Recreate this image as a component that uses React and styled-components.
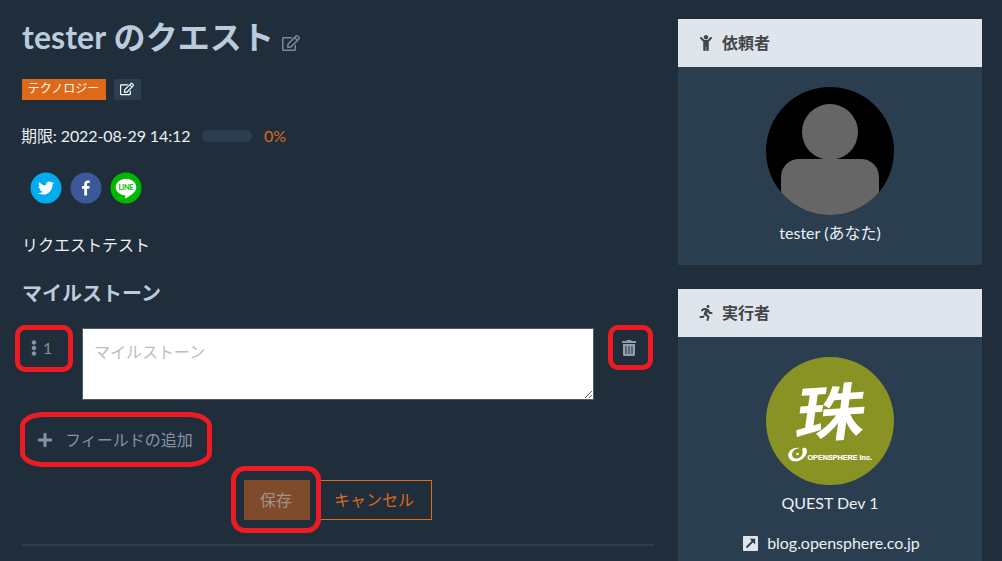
import React from "react";
import styled, { createGlobalStyle } from "styled-components";
import {
  FaRegEdit, FaChild, FaRunning, FaEllipsisV, FaTrashAlt, FaPlus,
} from "react-icons/fa";

const GlobalStyle = createGlobalStyle`
  *, *::before, *::after { box-sizing: border-box; }
  html, body { margin: 0; background: #202d3a; overflow: hidden; }
  body, button, textarea {
    font-family: Lato, "Noto Sans CJK JP", sans-serif;
    font-size: 16px;
    line-height: 24px;
  }
  body { color: #ebf0f5; }
  svg { display: block; flex: none; }
`;

const Page = styled.div`
  position: relative;
  height: 561px;
  overflow: hidden;
  display: grid;
  grid-template-columns: 632px 304px;
  column-gap: 24px;
  align-items: start;
  padding: 19px 20px 0 22px;
`;

const Main = styled.main`
  display: flex;
  flex-direction: column;
`;

const Title = styled.h1`
  display: flex;
  align-items: flex-end;
  gap: 8px;
  margin: 0;
  height: 36px;
  font-size: 32px;
  line-height: 36px;
  font-weight: 700;
  letter-spacing: 0.1px;
  color: #bccbdc;
  white-space: nowrap;
  svg { color: #7a8899; margin-bottom: 3px; }
`;

const Tags = styled.div`
  display: flex;
  gap: 8px;
  margin-top: 24px;
`;

const Tag = styled.span`
  display: flex;
  align-items: center;
  justify-content: center;
  width: ${(p) => p.$width}px;
  height: 21px;
  font-size: 12px;
  line-height: 20px;
  padding: 0 1px 1px 0;
  white-space: nowrap;
  color: #fff;
  background: ${(p) => p.$bg};
`;

const Deadline = styled.div`
  display: flex;
  align-items: center;
  gap: 12px;
  height: 24px;
  margin-top: 24px;
  white-space: nowrap;
`;

const DeadlineText = styled.span`
  width: 168px;
  margin-left: -1px;
  margin-right: 1px;
  letter-spacing: -0.1px;
`;

const Progress = styled.div`
  width: 50px;
  height: 12px;
  border-radius: 6px;
  background: #2b3e50;
`;

const Percent = styled.span`
  color: #df6919;
`;

const Shares = styled.div`
  display: flex;
  gap: 8px;
  margin: 24px 0 0 8px;
`;

const Description = styled.p`
  margin: 29px 0 0;
  height: 24px;
`;

const Subtitle = styled.h2`
  margin: 24px 0 0;
  height: 24px;
  font-size: 20px;
  line-height: 24px;
  font-weight: 700;
  color: #bccbdc;
`;

const FieldRow = styled.div`
  display: flex;
  align-items: flex-start;
  margin-top: 23px;
`;

const Handle = styled.div`
  display: flex;
  align-items: center;
  gap: 6px;
  width: 60px;
  height: 40px;
  padding-left: 9px;
  color: #8593a3;
`;

const HandleDots = styled(FaEllipsisV)`
  width: 6px;
  height: 16px;
`;

const Field = styled.textarea`
  width: 512px;
  height: 72px;
  margin: 0;
  padding: 11px;
  border: 1px solid #4e5d6c;
  border-radius: 0;
  background: #fff;
  resize: both;
  outline: none;
  &::placeholder { color: #b9bec4; opacity: 1; }
`;

const Remove = styled.button`
  display: flex;
  align-items: center;
  justify-content: center;
  width: 40px;
  height: 40px;
  margin-left: 15px;
  padding: 0;
  border: 0;
  background: none;
  color: #929eae;
`;

const AddField = styled.button`
  display: flex;
  align-items: center;
  align-self: flex-start;
  gap: 12px;
  height: 40px;
  margin-top: 20px;
  padding: 0 15px;
  border: 0;
  background: none;
  color: #8593a3;
`;

const Actions = styled.div`
  display: flex;
  justify-content: center;
  gap: 8px;
  margin-top: 20px;
`;

const Button = styled.button`
  height: 40px;
  padding: 0 17px 0 15px;
  border: 1px solid ${(p) => (p.$muted ? "#804b2a" : "#df6919")};
  background: ${(p) => (p.$muted ? "#804b2a" : "transparent")};
  color: ${(p) => (p.$muted ? "#9b9690" : "#df6919")};
`;

const Divider = styled.hr`
  width: 100%;
  height: 2px;
  margin: 24px 0 0;
  border: 0;
  background: #2b3e50;
`;

const Side = styled.aside`
  display: flex;
  flex-direction: column;
  gap: 24px;
`;

const Card = styled.section`
  height: ${(p) => p.$height}px;
  background: #2b3e50;
`;

const CardHeader = styled.header`
  display: flex;
  align-items: center;
  gap: 8px;
  height: 48px;
  padding-left: 20px;
  background: #dee5ed;
  color: #444648;
  font-weight: 700;
`;

const IconSlot = styled.span`
  display: flex;
  justify-content: center;
  width: 15px;
  margin-right: 1px;
`;

const CardBody = styled.div`
  display: flex;
  flex-direction: column;
  align-items: center;
  padding-top: 20px;
`;

const Name = styled.div`
  margin-top: 6px;
  height: 24px;
`;

const SiteLink = styled.div`
  display: flex;
  align-items: center;
  gap: 9px;
  margin-top: 16px;
  height: 24px;
  padding-left: 3px;
  letter-spacing: -0.04px;
`;

const Mark = styled.div`
  position: absolute;
  left: ${(p) => p.$x}px;
  top: ${(p) => p.$y}px;
  width: ${(p) => p.$w}px;
  height: ${(p) => p.$h}px;
  border: 5px solid #ed1c24;
  border-radius: ${(p) => p.$r};
  pointer-events: none;
`;

function ShareIcon({ color, children }) {
  return (
    <svg width="32" height="32" viewBox="0 0 64 64">
      <circle cx="32" cy="32" r="31" fill={color} />
      {children}
    </svg>
  );
}

function LinkIcon() {
  return (
    <svg width="15" height="15" viewBox="0 0 15 15">
      <rect width="15" height="15" rx="0.8" fill="#dee5ed" />
      <path d="M3.500 11.500L10 5" stroke="#2b3e50" strokeWidth="1.800" />
      <path d="M6.500 2.800H12.200V8.500Z" fill="#2b3e50" />
    </svg>
  );
}

function PersonAvatar() {
  return (
    <svg width="128" height="128" viewBox="0 0 128 128">
      <defs>
        <clipPath id="round"><circle cx="64" cy="64" r="64" /></clipPath>
      </defs>
      <g clipPath="url(#round)">
        <rect width="128" height="128" fill="#000" />
        <circle cx="64" cy="45" r="28" fill="#666" />
        <rect x="15" y="72" width="98" height="80" rx="18" fill="#666" />
      </g>
    </svg>
  );
}

function CompanyAvatar() {
  return (
    <svg width="128" height="128" viewBox="0 0 128 128">
      <circle cx="64" cy="64" r="64" fill="#889323" />
      <text
        transform="translate(27 81) skewX(-12) rotate(-4)"
        fontFamily="'Noto Sans CJK JP', sans-serif"
        fontWeight="700"
        fontSize="62"
        textLength="69"
        lengthAdjust="spacingAndGlyphs"
        fill="#fff"
      >珠</text>
      <path d="M34 91C27 89.500 22 94 22.300 98.500C22.700 103.500 28 106 33.500 103.500C39 101 42 96 40.500 92C39.500 90 36.500 90.500 36 92.500C38 96 35.500 100.500 31.500 101.500C27.500 102 25 99 26.500 95.500C28 92.500 30.500 91.500 34 91Z" fill="#fff" />
      <circle cx="31.500" cy="97" r="1.300" fill="#fff" />
      <text
        x="41.500" y="102.700"
        fontFamily="'Liberation Sans', sans-serif"
        fontWeight="700"
        fontSize="7.800"
        textLength="64.500"
        lengthAdjust="spacingAndGlyphs"
        fill="#fff"
        stroke="#fff"
        strokeWidth="0.200"
      >OPENSPHERE Inc.</text>
    </svg>
  );
}

export default function App() {
  return (
    <>
      <GlobalStyle />
      <Page>
        <Main>
          <Title>tester のクエスト<FaRegEdit size={18} /></Title>
          <Tags>
            <Tag $width={84} $bg="#df6919">テクノロジー</Tag>
            <Tag $width={27} $bg="#2b3e50"><FaRegEdit size={14} /></Tag>
          </Tags>
          <Deadline>
            <DeadlineText>期限: 2022-08-29 14:12</DeadlineText>
            <Progress />
            <Percent>0%</Percent>
          </Deadline>
          <Shares>
            <ShareIcon color="#00aced">
              <path fill="#fff" d="M48,22.1c-1.2,0.5-2.4,0.9-3.8,1c1.4-0.8,2.4-2.1,2.9-3.6c-1.3,0.8-2.7,1.3-4.2,1.6C41.7,19.8,40,19,38.2,19c-3.6,0-6.6,2.9-6.6,6.6c0,0.5,0.1,1,0.2,1.5c-5.5-0.3-10.3-2.9-13.5-6.9c-0.6,1-0.9,2.1-0.9,3.3c0,2.3,1.2,4.3,2.9,5.5c-1.1,0-2.1-0.3-3-0.8c0,0,0,0.1,0,0.1c0,3.2,2.3,5.8,5.3,6.4c-0.6,0.1-1.1,0.2-1.7,0.2c-0.4,0-0.8,0-1.2-0.1c0.8,2.6,3.3,4.5,6.1,4.6c-2.2,1.8-5.1,2.8-8.2,2.8c-0.5,0-1.1,0-1.6-0.1c2.9,1.9,6.4,2.9,10.1,2.9c12.1,0,18.7-10,18.7-18.7c0-0.3,0-0.6,0-0.8C46,24.5,47.1,23.4,48,22.1z" />
            </ShareIcon>
            <ShareIcon color="#3b5998">
              <path fill="#fff" d="M34.1,47V33.3h4.6l0.7-5.3h-5.3v-3.4c0-1.5,0.4-2.6,2.6-2.6l2.8,0v-4.8c-0.5-0.1-2.2-0.2-4.1-0.2c-4.1,0-6.9,2.5-6.9,7V28H24v5.3h4.5V47H34.1z" />
            </ShareIcon>
            <ShareIcon color="#00b800">
              <path fill="#fff" d="M52.62 30.138c0 3.693-1.432 7.019-4.42 10.296h.001c-4.326 4.979-14 11.044-16.201 11.972-2.2.927-1.876-.591-1.786-1.112l.294-1.765c.069-.527.142-1.343-.066-1.865-.232-.574-1.146-.872-1.817-1.016-9.909-1.31-17.245-8.238-17.245-16.51 0-9.226 9.251-16.733 20.62-16.733 11.37 0 20.62 7.507 20.62 16.733z" />
              <text x="17" y="35.500" fontFamily="Lato, sans-serif" fontWeight="700" fontSize="14.500" textLength="30" lengthAdjust="spacing" fill="#00b800">LINE</text>
            </ShareIcon>
          </Shares>
          <Description>リクエストテスト</Description>
          <Subtitle>マイルストーン</Subtitle>
          <FieldRow>
            <Handle><HandleDots />1</Handle>
            <Field placeholder="マイルストーン" />
            <Remove><FaTrashAlt size={16} /></Remove>
          </FieldRow>
          <AddField><FaPlus size={16} />フィールドの追加</AddField>
          <Actions>
            <Button $muted>保存</Button>
            <Button>キャンセル</Button>
          </Actions>
          <Divider />
        </Main>
        <Side>
          <Card $height={246}>
            <CardHeader><IconSlot><FaChild size={16} /></IconSlot>依頼者</CardHeader>
            <CardBody>
              <PersonAvatar />
              <Name>tester (あなた)</Name>
            </CardBody>
          </Card>
          <Card $height={290}>
            <CardHeader><IconSlot><FaRunning size={16} /></IconSlot>実行者</CardHeader>
            <CardBody>
              <CompanyAvatar />
              <Name>QUEST Dev 1</Name>
              <SiteLink><LinkIcon />blog.opensphere.co.jp</SiteLink>
            </CardBody>
          </Card>
        </Side>
        <Mark $x={15} $y={325} $w={58} $h={47} $r="10px" />
        <Mark $x={608} $y={325} $w={45} $h={45} $r="10px" />
        <Mark $x={20} $y={412} $w={192} $h={55} $r="24px / 14px" />
        <Mark $x={231} $y={466} $w={90} $h={67} $r="14px" />
      </Page>
    </>
  );
}
